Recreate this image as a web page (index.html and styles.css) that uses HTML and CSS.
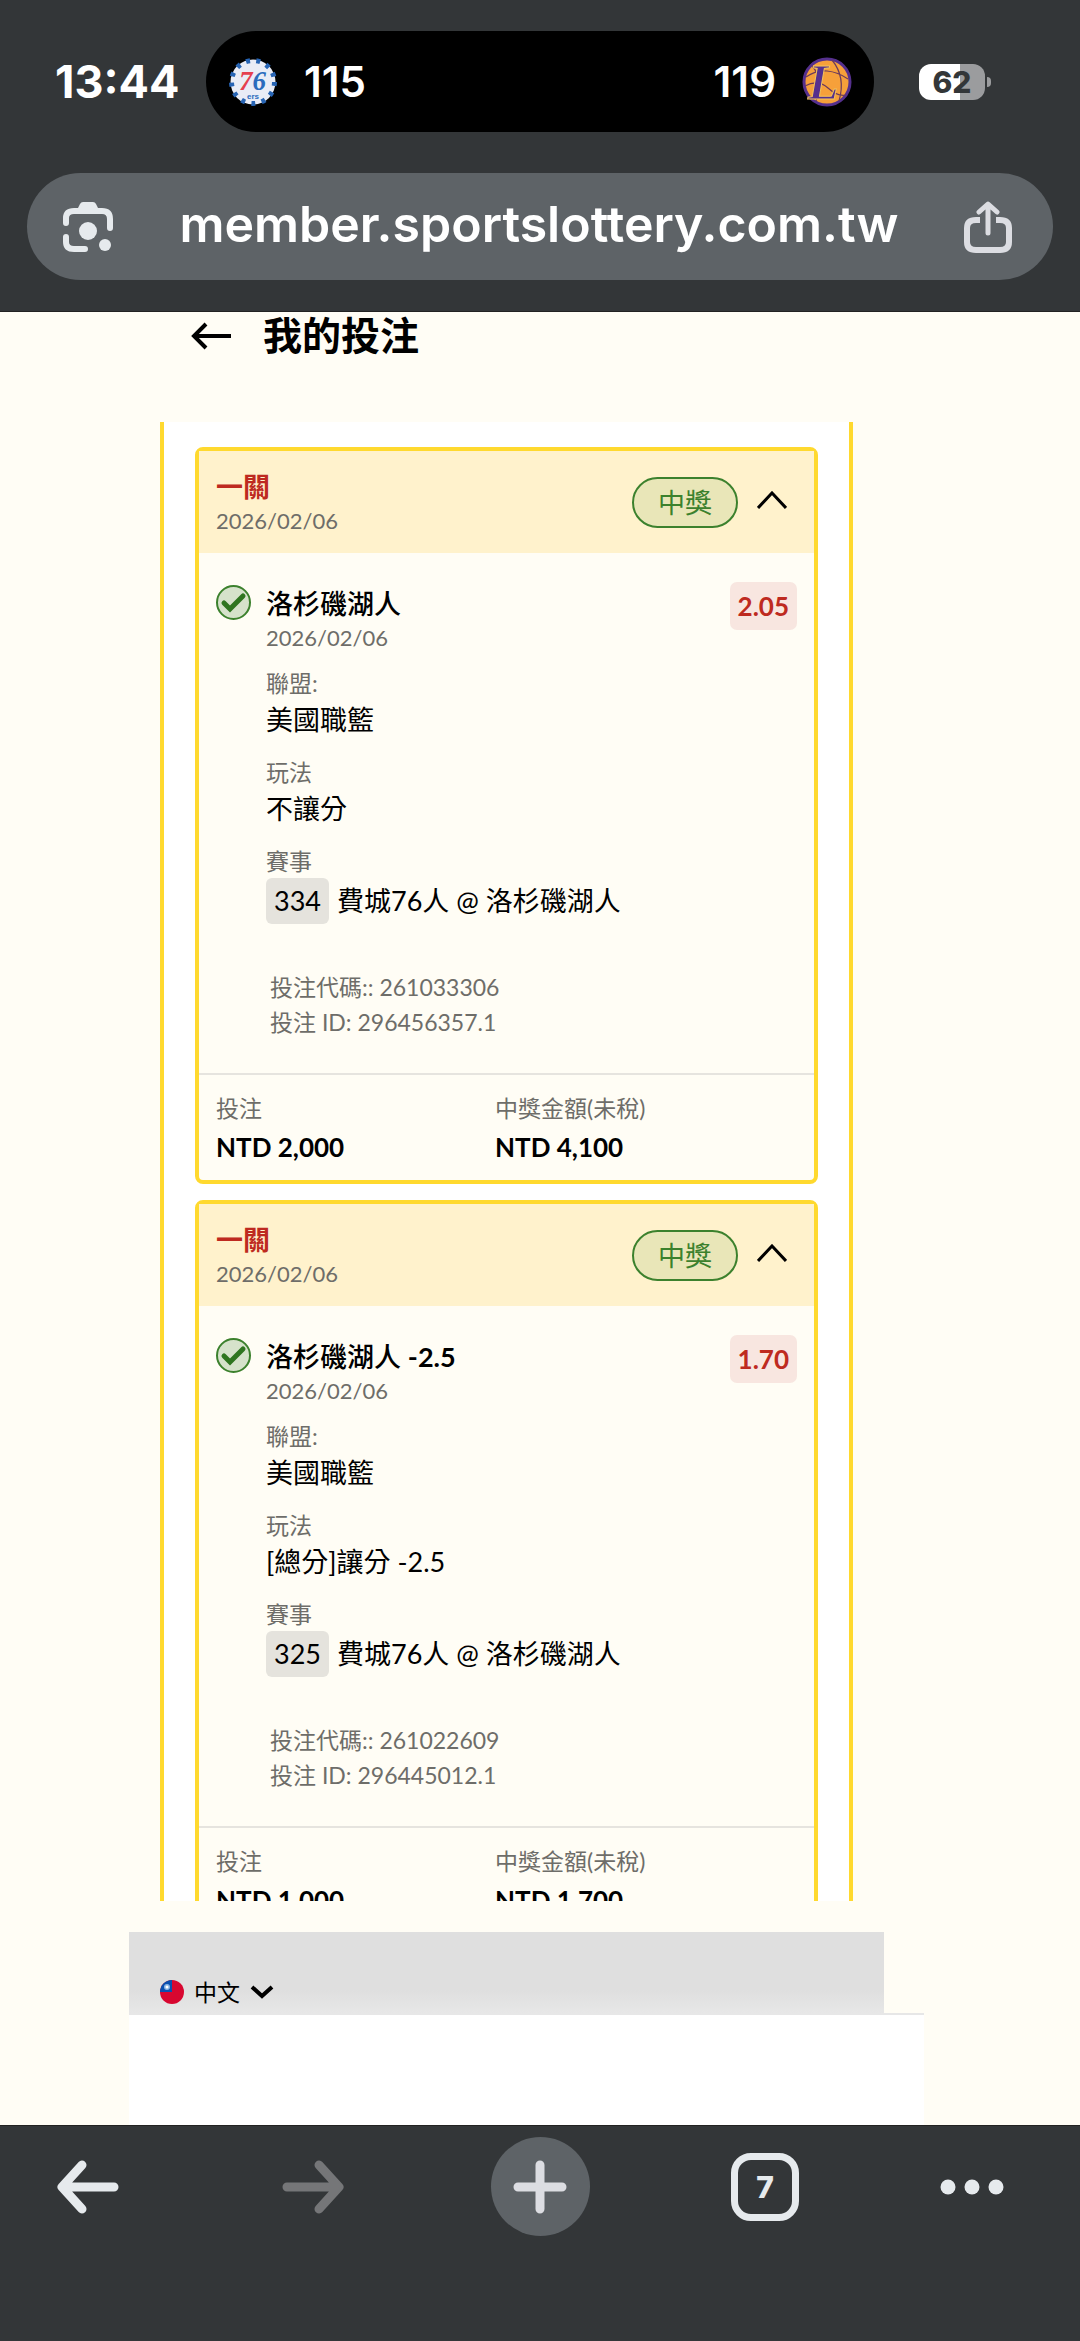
FILE: index.html
```html
<!DOCTYPE html>
<html lang="zh-Hant">
<head>
<meta charset="UTF-8">
<meta name="viewport" content="width=device-width, initial-scale=1.0">
<title>我的投注</title>
<link rel="stylesheet" href="styles.css">
</head>
<body>

<header class="chrome-top">
  <div class="status-bar">
    <span class="clock">13:44</span>
    <div class="island">
      <svg class="team-logo" viewBox="0 0 50 50" aria-hidden="true">
        <circle cx="25" cy="25" r="22.5" fill="#e9ecf6"/>
        <circle cx="25" cy="25" r="21.5" fill="none" stroke="#2764b4" stroke-width="5" stroke-dasharray="4 6.4"/>
        <text x="11" y="33" class="logo-num"><tspan fill="#e5404f">7</tspan><tspan fill="#2a6bbd">6</tspan></text>
        <text x="19" y="42" class="logo-ers">ers</text>
      </svg>
      <span class="score">115</span>
      <span class="score score-right">119</span>
      <svg class="team-logo" viewBox="0 0 50 50" aria-hidden="true">
        <circle cx="25" cy="25" r="23" fill="#f6a03a" stroke="#55308d" stroke-width="3"/>
        <path d="M4 20Q14 13 25 14T46 22M10 9Q22 22 14 44M30 3Q44 20 37 44M3 29Q16 22 26 31T44 38" fill="none" stroke="#6b3a5c" stroke-width="1.2"/>
        <text x="6" y="42" class="logo-l">L</text>
      </svg>
    </div>
    <div class="battery"><span class="battery-level">62</span></div>
  </div>
  <div class="url-bar">
    <button class="icon-button" aria-label="Lens">
      <svg width="52" height="52" viewBox="0 0 52 52">
        <path d="M4 22V17Q4 10 12 10H40Q48 10 48 18V27M4 36V41Q4 48 12 48H23" fill="none" stroke="#e6eaed" stroke-width="6" stroke-linecap="round"/>
        <path d="M15 9L18 3Q19 1 21 1H31Q33 1 34 3L37 9Z" fill="#e6eaed"/>
        <circle cx="26" cy="30" r="9" fill="#e6eaed"/>
        <circle cx="43" cy="44" r="6" fill="#e6eaed"/>
      </svg>
    </button>
    <input class="url" type="text" aria-label="Address" value="member.sportslottery.com.tw">
    <button class="icon-button" aria-label="Share">
      <svg width="48" height="52" viewBox="0 0 48 52" fill="none" stroke="#dcdde2" stroke-width="6" stroke-linecap="round" stroke-linejoin="round">
        <path d="M16 19H12Q3 19 3 27V41Q3 49 12 49H36Q45 49 45 41V27Q45 19 36 19H32" stroke-linecap="butt"/>
        <path d="M24 32V4M15 11L24 3L33 11" stroke-width="5"/>
      </svg>
    </button>
  </div>
</header>

<main class="page">
  <div class="page-title">
    <a class="back" href="#" aria-label="返回">
      <svg width="40" height="28" viewBox="0 0 40 28" fill="none" stroke="#000" stroke-width="4">
        <path d="M40 14H3M15 2L3 14L15 26"/>
      </svg>
    </a>
    <h1>我的投注</h1>
  </div>

  <div class="bets">
    <article class="card">
      <div class="card-head">
        <div class="card-name">
          <h2>一關</h2>
          <p class="date">2026/02/06</p>
        </div>
        <span class="badge">中獎</span>
        <button class="toggle" aria-label="收合">
          <svg width="30" height="18" viewBox="0 0 30 18" fill="none" stroke="#000" stroke-width="3"><path d="M1 17L15 2L29 17"/></svg>
        </button>
      </div>
      <div class="leg">
        <svg class="check" width="35" height="35" viewBox="0 0 35 35">
          <circle cx="17.500" cy="17.500" r="16.500" fill="#d6e2cb" stroke="#3c812d" stroke-width="2"/>
          <path d="M8 18L14 24L27 11" fill="none" stroke="#2f7520" stroke-width="5" stroke-linecap="round"/>
        </svg>
        <div>
          <h3>洛杉磯湖人</h3>
          <p class="date">2026/02/06</p>
          <dl class="details">
            <dt>聯盟:</dt>
            <dd>美國職籃</dd>
            <dt>玩法</dt>
            <dd>不讓分</dd>
            <dt>賽事</dt>
            <dd class="match"><span class="code">334</span><span>費城76人 @ 洛杉磯湖人</span></dd>
          </dl>
          <p class="ref">投注代碼:: 261033306<br>投注 ID: 296456357.1</p>
        </div>
        <span class="odds">2.05</span>
      </div>
      <dl class="totals">
        <div><dt>投注</dt><dd>NTD 2,000</dd></div>
        <div><dt>中獎金額(未稅)</dt><dd>NTD 4,100</dd></div>
      </dl>
    </article>

    <article class="card">
      <div class="card-head">
        <div class="card-name">
          <h2>一關</h2>
          <p class="date">2026/02/06</p>
        </div>
        <span class="badge">中獎</span>
        <button class="toggle" aria-label="收合">
          <svg width="30" height="18" viewBox="0 0 30 18" fill="none" stroke="#000" stroke-width="3"><path d="M1 17L15 2L29 17"/></svg>
        </button>
      </div>
      <div class="leg">
        <svg class="check" width="35" height="35" viewBox="0 0 35 35">
          <circle cx="17.500" cy="17.500" r="16.500" fill="#d6e2cb" stroke="#3c812d" stroke-width="2"/>
          <path d="M8 18L14 24L27 11" fill="none" stroke="#2f7520" stroke-width="5" stroke-linecap="round"/>
        </svg>
        <div>
          <h3>洛杉磯湖人 <b>-2.5</b></h3>
          <p class="date">2026/02/06</p>
          <dl class="details">
            <dt>聯盟:</dt>
            <dd>美國職籃</dd>
            <dt>玩法</dt>
            <dd>[總分]讓分 -2.5</dd>
            <dt>賽事</dt>
            <dd class="match"><span class="code">325</span><span>費城76人 @ 洛杉磯湖人</span></dd>
          </dl>
          <p class="ref">投注代碼:: 261022609<br>投注 ID: 296445012.1</p>
        </div>
        <span class="odds">1.70</span>
      </div>
      <dl class="totals">
        <div><dt>投注</dt><dd>NTD 1,000</dd></div>
        <div><dt>中獎金額(未稅)</dt><dd>NTD 1,700</dd></div>
      </dl>
    </article>
  </div>

  <footer class="footer">
    <div class="language">
      <svg width="24" height="24" viewBox="0 0 24 24" aria-hidden="true">
        <circle cx="12" cy="12" r="12" fill="#d80730"/>
        <path d="M12 0V12H0A12 12 0 0 1 12 0Z" fill="#0a50b0"/>
        <circle cx="7" cy="7" r="3" fill="#8db4e4"/>
        <circle cx="7" cy="7" r="1.500" fill="#fff"/>
      </svg>
      <select class="language-select" aria-label="語言">
        <option>中文</option>
      </select>
      <svg width="24" height="14" viewBox="0 0 24 14" fill="none" stroke="#000" stroke-width="4" aria-hidden="true"><path d="M2 2L12 11L22 2"/></svg>
    </div>
    <div class="footer-blank"></div>
  </footer>
</main>

<nav class="toolbar">
  <button aria-label="Back">
    <svg width="64" height="54" viewBox="0 0 64 54" fill="none" stroke="#e6eaed" stroke-width="9" stroke-linecap="round" stroke-linejoin="round"><path d="M58 27H6M26 5L6 27L26 49"/></svg>
  </button>
  <button aria-label="Forward">
    <svg width="64" height="54" viewBox="0 0 64 54" fill="none" stroke="#757678" stroke-width="9" stroke-linecap="round" stroke-linejoin="round"><path d="M6 27H58M38 5L58 27L38 49"/></svg>
  </button>
  <button class="new-tab" aria-label="New tab">
    <svg width="54" height="54" viewBox="0 0 54 54" fill="none" stroke="#dcdde2" stroke-width="9" stroke-linecap="round"><path d="M5 27H49M27 5V49"/></svg>
  </button>
  <button class="tabs" aria-label="Tabs"><span>7</span></button>
  <button aria-label="More">
    <svg width="64" height="16" viewBox="0 0 64 16" fill="#e6eaed"><circle cx="8" cy="8" r="7.500"/><circle cx="32" cy="8" r="7.500"/><circle cx="56" cy="8" r="7.500"/></svg>
  </button>
</nav>

</body>
</html>
```
FILE: styles.css
```css
* {
  box-sizing: border-box;
}
body {
  margin: 0;
  height: 100vh;
  display: flex;
  flex-direction: column;
  background: #fffdf5;
  color: #000;
  font-family: Lato, "Noto Sans CJK TC", sans-serif;
  font-size: 27px;
}
h1, h2, h3, p, dl, dd {
  margin: 0;
}
button {
  border: 0;
  padding: 0;
  background: none;
  color: inherit;
  cursor: pointer;
}
svg {
  display: block;
}

/* browser top */
.chrome-top {
  background: #333638;
  color: #fff;
  font-family: Inter, sans-serif;
  padding: 31px 27px;
  border-bottom: 1px solid #222;
}
.status-bar {
  display: flex;
  align-items: center;
  padding: 0 68px 0 28px;
}
.clock {
  width: 151px;
  font-size: 45px;
  font-weight: 700;
  line-height: 100px;
}
.island {
  flex: 1;
  display: flex;
  align-items: center;
  height: 101px;
  padding: 0 22px;
  border-radius: 51px;
  background: #000;
}
.team-logo {
  width: 50px;
  height: 50px;
  overflow: visible;
}
.logo-num {
  font: italic 700 27px "Liberation Serif", serif;
}
.logo-ers {
  font: 700 8px "Liberation Sans", sans-serif;
  fill: #2a6bbd;
}
.logo-l {
  font: italic 700 50px "Liberation Serif", serif;
  fill: #55308d;
  stroke: #f3c25c;
  stroke-width: 1px;
}
.score {
  margin-left: 26px;
  font-size: 42px;
  font-weight: 600;
}
.score-right {
  margin: 0 26px 0 auto;
}
.battery {
  position: relative;
  width: 66px;
  height: 36px;
  margin-left: 45px;
  border-radius: 12px;
  background: linear-gradient(90deg, #fff 62%, #9b9c9e 62%);
  text-align: center;
}
.battery::after {
  content: "";
  position: absolute;
  left: 68px;
  top: 13px;
  width: 4px;
  height: 10px;
  border-radius: 0 5px 5px 0;
  background: #9b9c9e;
}
.battery-level {
  display: block;
  color: #333638;
  font-size: 30px;
  font-weight: 800;
  line-height: 36px;
}
.url-bar {
  display: flex;
  align-items: center;
  height: 107px;
  margin-top: 41px;
  padding: 0 41px 0 35px;
  border-radius: 54px;
  background: #5e6367;
}
.url {
  flex: 1;
  min-width: 0;
  border: 0;
  padding: 0 0 6px;
  outline: none;
  background: transparent;
  color: #fff;
  font: 600 50px Inter, sans-serif;
  text-align: center;
}

/* page */
.page {
  flex: 1;
  min-height: 0;
  display: flex;
  flex-direction: column;
}
.page-title {
  display: flex;
  gap: 32px;
  height: 110px;
  padding-left: 191px;
}
.page-title h1 {
  font-size: 39px;
  font-weight: 700;
  line-height: 46px;
}
.back {
  padding-top: 10px;
}
.bets {
  flex: 1;
  min-height: 0;
  overflow-y: auto;
  scrollbar-width: none;
  margin: 0 227px 0 160px;
  padding: 25px 31px;
  border: solid #ffd92e;
  border-width: 0 4px;
  background: #fff;
}
.card {
  margin-bottom: 16px;
  border: 4px solid #ffd92e;
  border-radius: 8px;
  background: #fffdf5;
}
.card-head {
  display: flex;
  align-items: center;
  height: 102px;
  padding: 0 27px 0 17px;
  background: #fff2cc;
}
.card-name {
  padding-top: 3px;
}
.card-head h2 {
  color: #be2a20;
  font-size: 27px;
  font-weight: 700;
  line-height: 34px;
}
.date {
  color: #6e6d69;
  font-size: 22px;
  line-height: 34px;
}
.badge {
  margin-left: auto;
  padding: 0 24px;
  border: 2px solid #3c812d;
  border-radius: 26px;
  background: #e9e6b8;
  color: #3c812d;
  line-height: 47px;
}
.toggle {
  margin-left: 19px;
  padding-bottom: 4px;
}
.leg {
  display: grid;
  grid-template-columns: 35px 1fr auto;
  column-gap: 15px;
  align-items: start;
  padding: 29px 17px 33px;
}
.check {
  margin-top: 3px;
}
.leg h3 {
  margin-top: 5px;
  font-size: 27px;
  font-weight: 500;
  line-height: 34px;
}
.details dt {
  margin-top: 13px;
  color: #6e6d69;
  font-size: 23px;
  line-height: 30px;
}
.details dd {
  margin-bottom: 15px;
  line-height: 44px;
}
.details dd + dt {
  margin-top: 0;
}
.details .match {
  display: flex;
  gap: 8px;
  margin: 2px 0 0;
  line-height: 46px;
}
.code {
  padding: 0 8px;
  border-radius: 6px;
  background: #e5e3dd;
}
.ref {
  margin: 46px 0 0 4px;
  color: #6e6d69;
  font-size: 23px;
  line-height: 35px;
}
.odds {
  padding: 0 8px;
  border-radius: 7px;
  background: #f8e6e0;
  color: #be2a20;
  font-size: 26px;
  font-weight: 700;
  line-height: 48px;
}
.totals {
  display: grid;
  grid-template-columns: 279fr 302fr;
  padding: 16px 17px 11px;
  border-top: 2px solid #e6e4df;
}
.totals dt {
  color: #6e6d69;
  font-size: 23px;
  line-height: 34px;
}
.totals dd {
  font-size: 26px;
  font-weight: 700;
  line-height: 44px;
}

.footer {
  margin: 31px 156px 0 129px;
}
.language {
  display: flex;
  align-items: center;
  gap: 10px;
  height: 81px;
  margin-right: 40px;
  padding: 38px 31px 0;
  background: linear-gradient(#dfdfdf 72%, #e7e7e7);
}
.language-select {
  appearance: none;
  border: 0;
  padding: 0;
  background: transparent;
  color: #000;
  font: 23px/34px Lato, "Noto Sans CJK TC", sans-serif;
}
.footer-blank {
  height: 112px;
  border-top: 2px solid #e7e7e7;
  background: #fff;
}

/* browser bottom */
.toolbar {
  display: grid;
  grid-template-columns: 176fr 274fr 180fr 270fr 144fr;
  justify-items: center;
  align-items: center;
  height: 216px;
  padding: 11px 36px 105px 0;
  border-top: 1px solid #222;
  background: #333638;
}
.new-tab {
  display: grid;
  place-items: center;
  width: 99px;
  height: 99px;
  border-radius: 50%;
  background: #5e6367;
}
.tabs {
  width: 68px;
  height: 68px;
  border: 7px solid #e6eaed;
  border-radius: 20px;
  color: #e6eaed;
  font: 800 30px Inter, sans-serif;
}
```
